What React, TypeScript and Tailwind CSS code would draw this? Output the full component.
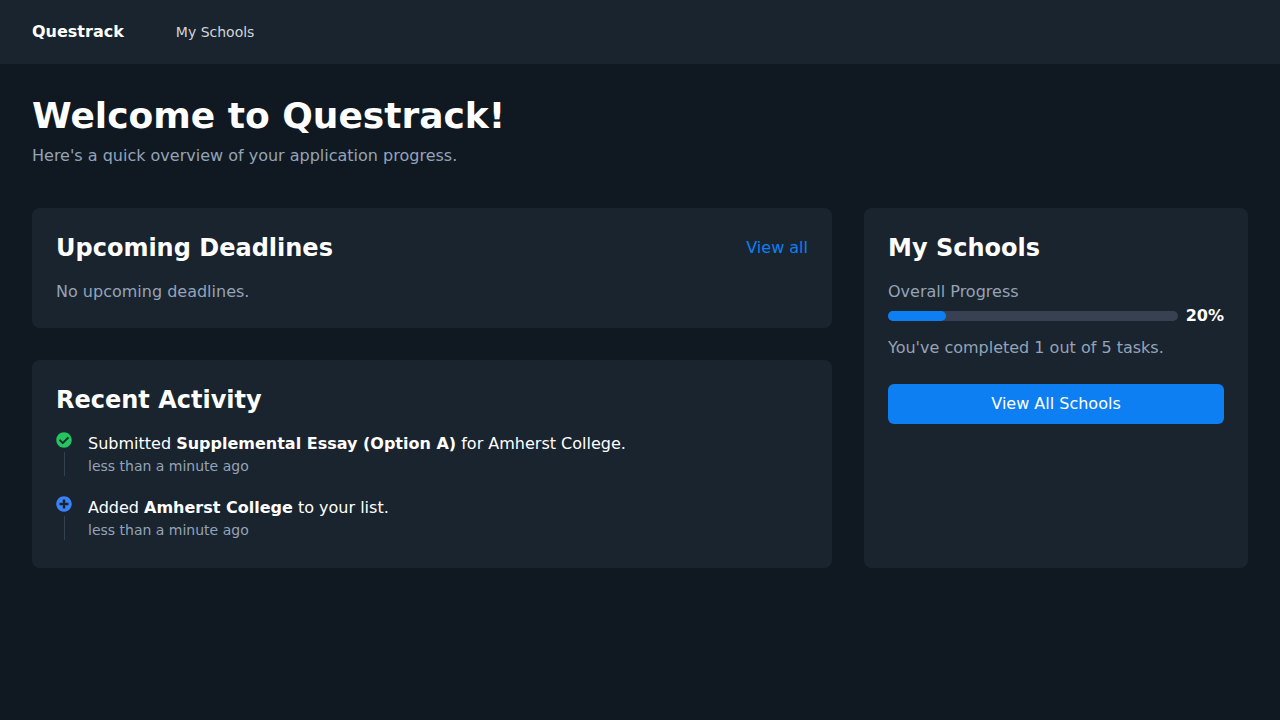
import { FaCheckCircle, FaPlusCircle } from "react-icons/fa";
import type { ReactNode } from "react";

function Activity({ icon, children, time }: { icon: ReactNode; children: ReactNode; time: string }) {
  return (
    <li className="flex gap-4 pb-1">
      <div className="flex w-4 flex-col items-center">
        {icon}
        <div className="mt-1 h-6 w-px bg-[#334155]" />
      </div>
      <div>
        <p className="text-white">{children}</p>
        <p className="text-sm text-[#94a3b8]">{time}</p>
      </div>
    </li>
  );
}

export default function App() {
  const progress = 20;
  return (
    <div className="min-h-screen bg-[#101922] font-['DejaVu_Sans',sans-serif] text-white">
      <header className="bg-[#1a242e]">
        <nav className="flex h-16 items-center gap-10 px-8">
          <a href="#" className="font-bold">Questrack</a>
          <a href="#schools" className="px-3 py-2 text-sm text-[#d1d5db]">My Schools</a>
        </nav>
      </header>
      <main className="p-8">
        <div className="mb-10">
          <h1 className="text-4xl leading-10 font-bold">Welcome to Questrack!</h1>
          <p className="mt-2 text-[#94a3b8]">Here's a quick overview of your application progress.</p>
        </div>
        <div className="grid grid-cols-1 gap-8 lg:grid-cols-3">
          <div className="flex flex-col gap-8 lg:col-span-2">
            <section className="rounded-lg bg-[#1a242e] p-6">
              <div className="mb-4 flex items-center justify-between">
                <h2 className="text-2xl font-bold">Upcoming Deadlines</h2>
                <a href="#deadlines" className="text-[#0d7ff2]">View all</a>
              </div>
              <p className="text-[#94a3b8]">No upcoming deadlines.</p>
            </section>
            <section className="rounded-lg bg-[#1a242e] p-6">
              <h2 className="mb-4 text-2xl font-bold">Recent Activity</h2>
              <ul className="flex flex-col gap-4">
                <Activity icon={<FaCheckCircle className="size-4 text-[#22c55e]" />} time="less than a minute ago">
                  Submitted <strong>Supplemental Essay (Option A)</strong> for Amherst College.
                </Activity>
                <Activity icon={<FaPlusCircle className="size-4 text-[#3b82f6]" />} time="less than a minute ago">
                  Added <strong>Amherst College</strong> to your list.
                </Activity>
              </ul>
            </section>
          </div>
          <section className="rounded-lg bg-[#1a242e] p-6">
            <h2 className="mb-4 text-2xl font-bold">My Schools</h2>
            <p className="text-[#94a3b8]">Overall Progress</p>
            <div className="flex items-center gap-2">
              <div
                role="progressbar"
                aria-label="Overall Progress"
                aria-valuenow={progress}
                aria-valuemin={0}
                aria-valuemax={100}
                className="h-2.5 flex-1 rounded-full bg-[#374151]"
              >
                <div className="h-2.5 rounded-full bg-[#0d7ff2]" style={{ width: `${progress}%` }} />
              </div>
              <span className="font-bold">{progress}%</span>
            </div>
            <p className="mt-2 text-[#94a3b8]">You've completed 1 out of 5 tasks.</p>
            <button type="button" className="mt-6 w-full rounded-md bg-[#0d7ff2] px-4 py-2 text-white">
              View All Schools
            </button>
          </section>
        </div>
      </main>
    </div>
  );
}
